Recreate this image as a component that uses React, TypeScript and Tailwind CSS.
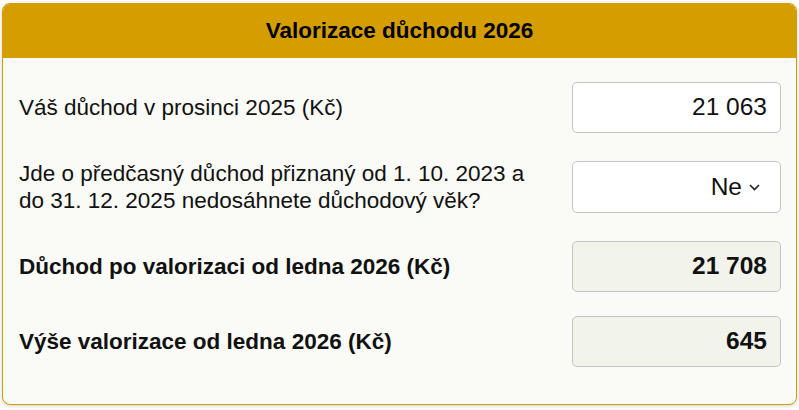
export default function App() {
  return (
    <div className="min-h-screen bg-white p-[2px] pt-[3px] font-['Liberation_Sans',Arial,sans-serif] text-[#111]">
      <div className="w-[795px] h-[402px] rounded-lg border border-[#d49d00] bg-[#fafaf6] shadow-[0_1px_4px_rgba(0,0,0,0.18)] overflow-hidden flex flex-col">
        <div className="h-[54px] shrink-0 bg-[#d49d00] flex items-center justify-center">
          <h1 className="text-[22.5px] font-bold text-black">Valorizace důchodu 2026</h1>
        </div>

        <div className="flex flex-col pl-[16px] pr-[15px] pt-[24px]">
          <div className="flex items-center justify-between h-[51px]">
            <label className="text-[22.5px]">Váš důchod v prosinci 2025 (Kč)</label>
            <div className="w-[209px] h-[51px] rounded-[5px] border border-[#c4c4c4] bg-white flex items-center justify-end pr-[13px] text-[24.5px]">
              21 063
            </div>
          </div>

          <div className="flex items-center justify-between h-[52px] mt-[28px]">
            <label className="text-[22.5px] leading-[27px]">
              Jde o předčasný důchod přiznaný od 1. 10. 2023 a
              <br />
              do 31. 12. 2025 nedosáhnete důchodový věk?
            </label>
            <div className="w-[209px] h-[52px] rounded-[5px] border border-[#c4c4c4] bg-white flex items-center justify-end pr-[20px] text-[24.5px] gap-[7px]">
              <span>Ne</span>
              <svg width="11" height="7" viewBox="0 0 11 7" fill="none" stroke="#222" strokeWidth="1.6">
                <path d="M1 1l4.5 4.5L10 1" />
              </svg>
            </div>
          </div>

          <div className="flex items-center justify-between h-[51px] mt-[28px]">
            <span className="text-[22.5px] font-bold">Důchod po valorizaci od ledna 2026 (Kč)</span>
            <div className="w-[209px] h-[51px] rounded-[5px] border border-[#c4c4c4] bg-[#f2f3ea] flex items-center justify-end pr-[13px] text-[24.5px] font-bold">
              21 708
            </div>
          </div>

          <div className="flex items-center justify-between h-[51px] mt-[24px]">
            <span className="text-[22.5px] font-bold">Výše valorizace od ledna 2026 (Kč)</span>
            <div className="w-[209px] h-[51px] rounded-[5px] border border-[#c4c4c4] bg-[#f2f3ea] flex items-center justify-end pr-[13px] text-[24.5px] font-bold">
              645
            </div>
          </div>
        </div>
      </div>
    </div>
  );
}
